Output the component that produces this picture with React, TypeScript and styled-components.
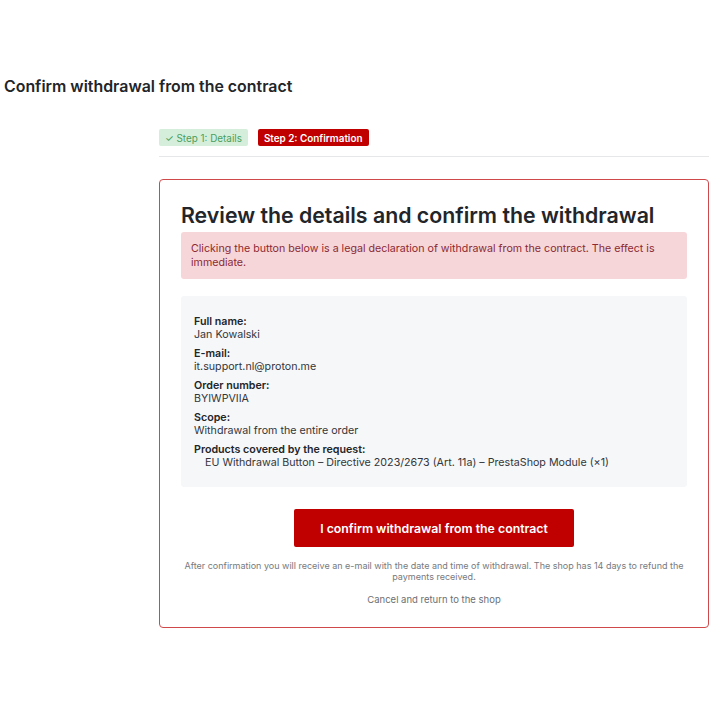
import React from 'react';
import styled, { createGlobalStyle } from 'styled-components';

const GlobalStyle = createGlobalStyle`
  html, body {
    margin: 0;
    padding: 0;
    background: #ffffff;
  }
  body {
    font-family: Inter, "Noto Sans", "Liberation Sans", sans-serif;
    color: #222529;
  }
`;

const details = [
  { label: 'Full name:', value: 'Jan Kowalski' },
  { label: 'E-mail:', value: 'it.support.nl@proton.me' },
  { label: 'Order number:', value: 'BYIWPVIIA' },
  { label: 'Scope:', value: 'Withdrawal from the entire order' },
];

const products = [
  'EU Withdrawal Button – Directive 2023/2673 (Art. 11a) – PrestaShop Module (×1)',
];

const App: React.FC = () => {
  return (
    <>
      <GlobalStyle />
      <Page>
        <PageTitle>Confirm withdrawal from the contract</PageTitle>
        <Layout>
          <Side />
          <Main>
            <Steps>
              <StepBadge $state="done">✓ Step 1: Details</StepBadge>
              <StepBadge $state="active">Step 2: Confirmation</StepBadge>
            </Steps>
            <Card>
              <CardHeading>Review the details and confirm the withdrawal</CardHeading>
              <Alert>
                Clicking the button below is a legal declaration of withdrawal from the
                contract. The effect is immediate.
              </Alert>
              <Summary>
                {details.map((d) => (
                  <Field key={d.label}>
                    <FieldLabel>{d.label}</FieldLabel>
                    <FieldValue>{d.value}</FieldValue>
                  </Field>
                ))}
                <Field>
                  <FieldLabel>Products covered by the request:</FieldLabel>
                  <ProductList>
                    {products.map((p) => (
                      <li key={p}>{p}</li>
                    ))}
                  </ProductList>
                </Field>
              </Summary>
              <Actions>
                <ConfirmButton type="button">I confirm withdrawal from the contract</ConfirmButton>
                <Note>
                  After confirmation you will receive an e-mail with the date and time of
                  withdrawal. The shop has 14 days to refund the payments received.
                </Note>
                <CancelLink href="#">Cancel and return to the shop</CancelLink>
              </Actions>
            </Card>
          </Main>
        </Layout>
      </Page>
    </>
  );
};

export default App;

const Page = styled.div`
  width: 720px;
  padding: 77px 0 0;
  box-sizing: border-box;
`;

const PageTitle = styled.h1`
  margin: 0 0 32px 4px;
  font-size: 15.9px;
  line-height: 20px;
  font-weight: 600;
  color: #222529;
`;

const Layout = styled.div`
  display: grid;
  grid-template-columns: 159px 550px;
`;

const Side = styled.div``;

const Main = styled.div`
  display: flex;
  flex-direction: column;
`;

const Steps = styled.div`
  display: flex;
  gap: 10px;
  padding-bottom: 10px;
  border-bottom: 1px solid #e6e7e9;
  margin-bottom: 22px;
`;

const StepBadge = styled.span<{ $state: 'done' | 'active' }>`
  display: inline-flex;
  align-items: center;
  height: 17px;
  padding: 0 6px;
  border-radius: 2px;
  font-size: 9.9px;
  font-weight: ${(p) => (p.$state === 'active' ? 600 : 400)};
  background: ${(p) => (p.$state === 'active' ? '#c00000' : '#d5eedb')};
  color: ${(p) => (p.$state === 'active' ? '#ffffff' : '#4a9e5c')};
`;

const Card = styled.div`
  border: 1px solid #d0494a;
  border-radius: 4px;
  padding: 21px 21px 21px;
  display: flex;
  flex-direction: column;
`;

const CardHeading = styled.h2`
  margin: 0 0 3px;
  font-size: 21.3px;
  line-height: 28px;
  font-weight: 600;
  color: #222529;
`;

const Alert = styled.div`
  background: #f7d6d9;
  color: #8a2a33;
  border-radius: 3px;
  padding: 10px 10px 9px;
  font-size: 10.65px;
  line-height: 14px;
  margin-bottom: 17px;
`;

const Summary = styled.div`
  background: #f6f7f9;
  border-radius: 3px;
  padding: 19px 13px 18px;
  display: flex;
  flex-direction: column;
  gap: 6px;
`;

const Field = styled.div`
  display: flex;
  flex-direction: column;
`;

const FieldLabel = styled.div`
  font-size: 10.7px;
  line-height: 13px;
  font-weight: 600;
  color: #222529;
`;

const FieldValue = styled.div`
  font-size: 10.7px;
  line-height: 13px;
  color: #333639;
`;

const ProductList = styled.ul`
  margin: 0;
  padding: 0 0 0 11px;
  list-style: none;
  font-size: 10.7px;
  line-height: 13px;
  color: #333639;
`;

const Actions = styled.div`
  display: flex;
  flex-direction: column;
  align-items: center;
  margin-top: 22px;
`;

const ConfirmButton = styled.button`
  height: 38px;
  padding: 0 26px;
  border: none;
  border-radius: 2px;
  background: #c00000;
  color: #ffffff;
  font-family: inherit;
  font-size: 12.3px;
  font-weight: 600;
  cursor: pointer;
`;

const Note = styled.p`
  margin: 13px 0 0;
  text-align: center;
  font-size: 9px;
  line-height: 11px;
  color: #777a7e;
`;

const CancelLink = styled.a`
  margin-top: 12px;
  font-size: 9.5px;
  line-height: 12px;
  color: #6c6f73;
  text-decoration: none;
`;
